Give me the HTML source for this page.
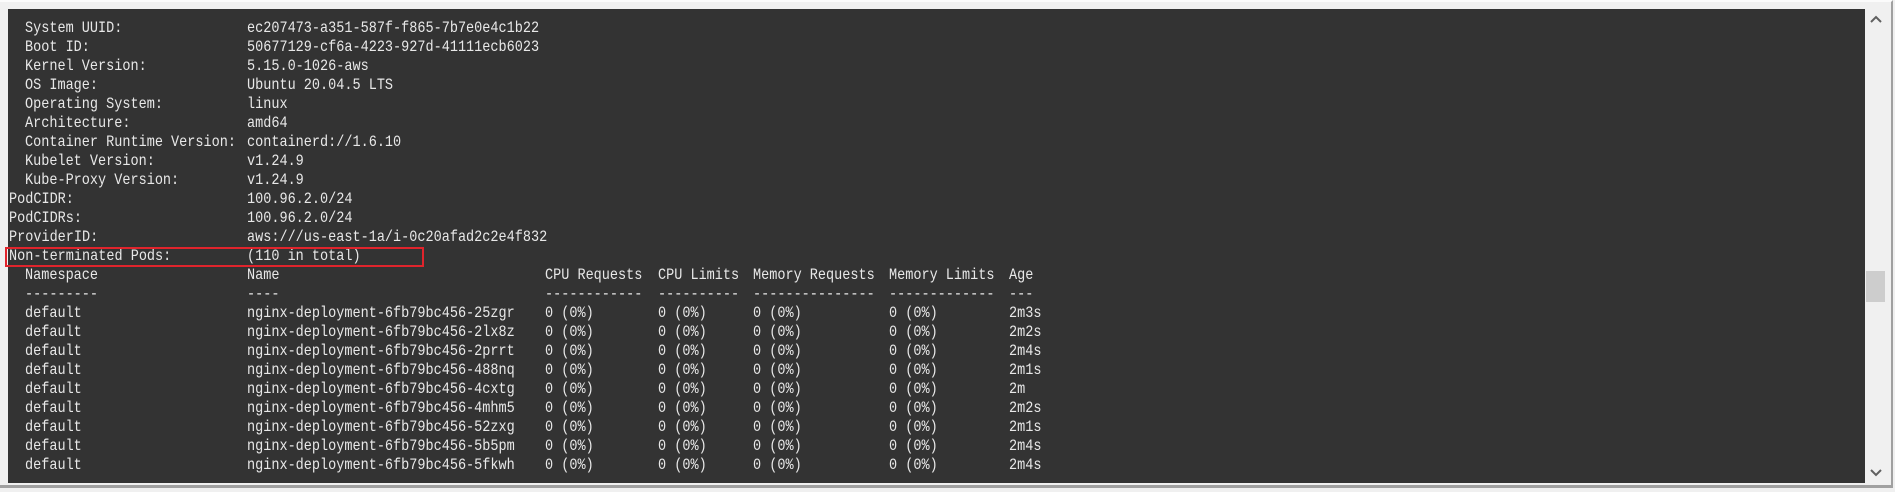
<!DOCTYPE html>
<html><head><meta charset="utf-8"><style>
html,body{margin:0;padding:0;}
body{width:1895px;height:492px;background:#f0f0f0;position:relative;overflow:hidden;}
.frame{position:absolute;left:0;top:0;width:1893px;height:488px;border-top:2px solid #fbfbfb;border-right:2px solid #a0a0a0;border-bottom:3px solid #a0a0a0;box-sizing:border-box;}
.term{position:absolute;left:8px;top:9px;width:1857px;height:474px;background:#333333;}
.sb{position:absolute;left:1866px;top:9px;width:20px;height:474px;background:#f0f0f0;}
.thumb{position:absolute;left:1866px;top:271px;width:19px;height:31px;background:#cdcdcd;}
.t{position:absolute;font-family:"Liberation Mono",monospace;font-size:16px;line-height:19px;color:#e8e8e8;white-space:pre;transform:scaleX(0.845);transform-origin:0 0;}
.box{position:absolute;left:5px;top:247px;width:419px;height:20px;border:2px solid #e0242c;box-sizing:border-box;}
</style></head><body>
<div class="frame"></div>
<div class="term"></div>
<div class="sb"></div>
<div class="thumb"></div>
<svg style="position:absolute;left:1869px;top:15px" width="14" height="10"><path d="M2 7 L7 2 L12 7" fill="none" stroke="#606060" stroke-width="2"/></svg>
<svg style="position:absolute;left:1869px;top:467px" width="14" height="10"><path d="M2 3 L7 8 L12 3" fill="none" stroke="#606060" stroke-width="2"/></svg>

<div class="t" style="left:25px;top:19px">System UUID:
Boot ID:
Kernel Version:
OS Image:
Operating System:
Architecture:
Container Runtime Version:
Kubelet Version:
Kube-Proxy Version:</div>
<div class="t" style="left:9px;top:190px">PodCIDR:
PodCIDRs:
ProviderID:
Non-terminated Pods:</div>
<div class="t" style="left:247px;top:19px">ec207473-a351-587f-f865-7b7e0e4c1b22
50677129-cf6a-4223-927d-41111ecb6023
5.15.0-1026-aws
Ubuntu 20.04.5 LTS
linux
amd64
containerd://1.6.10
v1.24.9
v1.24.9
100.96.2.0/24
100.96.2.0/24
aws:///us-east-1a/i-0c20afad2c2e4f832
(110 in total)
Name
----
nginx-deployment-6fb79bc456-25zgr
nginx-deployment-6fb79bc456-2lx8z
nginx-deployment-6fb79bc456-2prrt
nginx-deployment-6fb79bc456-488nq
nginx-deployment-6fb79bc456-4cxtg
nginx-deployment-6fb79bc456-4mhm5
nginx-deployment-6fb79bc456-52zxg
nginx-deployment-6fb79bc456-5b5pm
nginx-deployment-6fb79bc456-5fkwh</div>
<div class="t" style="left:25px;top:266px">Namespace
---------
default
default
default
default
default
default
default
default
default</div>
<div class="t" style="left:545px;top:266px">CPU Requests
------------
0 (0%)
0 (0%)
0 (0%)
0 (0%)
0 (0%)
0 (0%)
0 (0%)
0 (0%)
0 (0%)</div>
<div class="t" style="left:658px;top:266px">CPU Limits
----------
0 (0%)
0 (0%)
0 (0%)
0 (0%)
0 (0%)
0 (0%)
0 (0%)
0 (0%)
0 (0%)</div>
<div class="t" style="left:753px;top:266px">Memory Requests
---------------
0 (0%)
0 (0%)
0 (0%)
0 (0%)
0 (0%)
0 (0%)
0 (0%)
0 (0%)
0 (0%)</div>
<div class="t" style="left:889px;top:266px">Memory Limits
-------------
0 (0%)
0 (0%)
0 (0%)
0 (0%)
0 (0%)
0 (0%)
0 (0%)
0 (0%)
0 (0%)</div>
<div class="t" style="left:1009px;top:266px">Age
---
2m3s
2m2s
2m4s
2m1s
2m
2m2s
2m1s
2m4s
2m4s</div>
<div class="box"></div>
</body></html>
